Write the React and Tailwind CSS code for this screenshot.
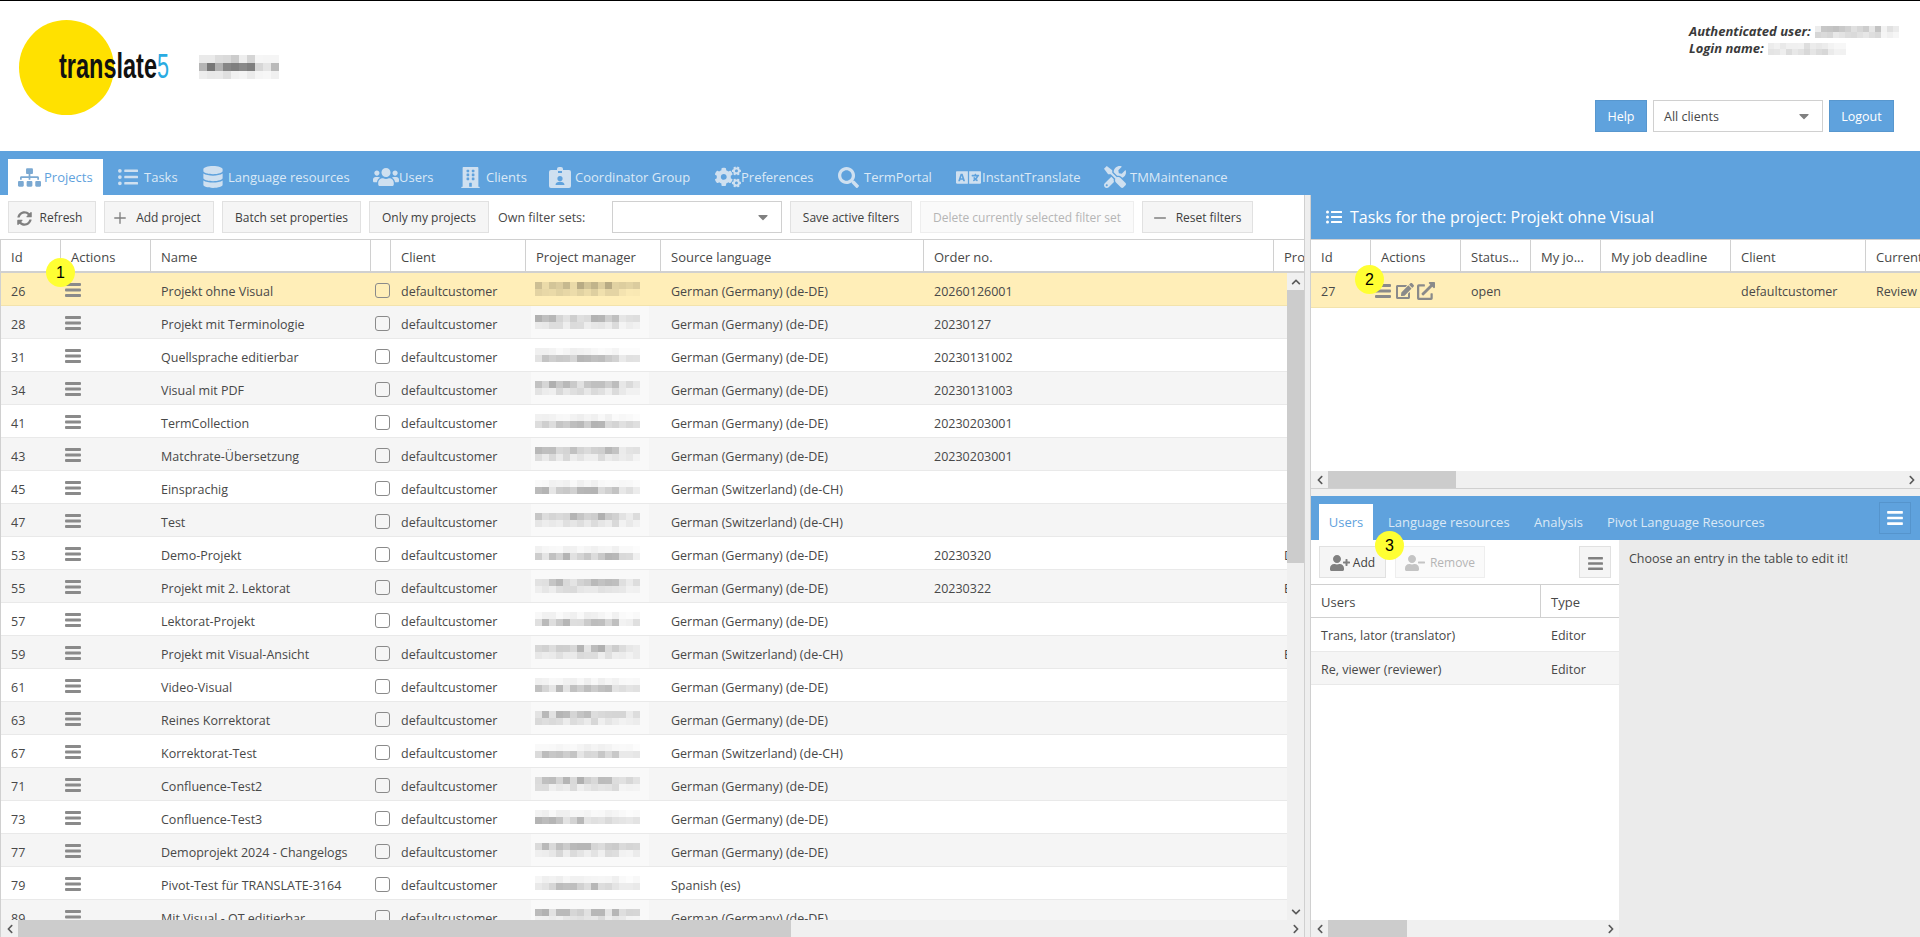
import {
  FaBars,
  FaBuilding,
  FaCaretDown,
  FaChevronDown,
  FaChevronLeft,
  FaChevronRight,
  FaChevronUp,
  FaCogs,
  FaDatabase,
  FaEdit,
  FaExternalLinkAlt,
  FaLanguage,
  FaListUl,
  FaSearch,
  FaSitemap,
  FaSyncAlt,
  FaTools,
  FaUserMinus,
  FaUserPlus,
  FaUsers,
} from 'react-icons/fa';
import { Minus, Plus } from 'lucide-react';

const DE = 'German (Germany) (de-DE)';
const CH = 'German (Switzerland) (de-CH)';

const projects = [
  { id: 26, name: 'Projekt ohne Visual', lang: DE, order: '20260126001' },
  { id: 28, name: 'Projekt mit Terminologie', lang: DE, order: '20230127' },
  { id: 31, name: 'Quellsprache editierbar', lang: DE, order: '20230131002' },
  { id: 34, name: 'Visual mit PDF', lang: DE, order: '20230131003' },
  { id: 41, name: 'TermCollection', lang: DE, order: '20230203001' },
  { id: 43, name: 'Matchrate-Übersetzung', lang: DE, order: '20230203001' },
  { id: 45, name: 'Einsprachig', lang: CH },
  { id: 47, name: 'Test', lang: CH },
  { id: 53, name: 'Demo-Projekt', lang: DE, order: '20230320', extra: 'D' },
  { id: 55, name: 'Projekt mit 2. Lektorat', lang: DE, order: '20230322', extra: 'E' },
  { id: 57, name: 'Lektorat-Projekt', lang: DE },
  { id: 59, name: 'Projekt mit Visual-Ansicht', lang: CH, extra: 'E' },
  { id: 61, name: 'Video-Visual', lang: DE },
  { id: 63, name: 'Reines Korrektorat', lang: DE },
  { id: 67, name: 'Korrektorat-Test', lang: CH },
  { id: 71, name: 'Confluence-Test2', lang: DE },
  { id: 73, name: 'Confluence-Test3', lang: DE },
  { id: 77, name: 'Demoprojekt 2024 - Changelogs', lang: DE },
  { id: 79, name: 'Pivot-Test für TRANSLATE-3164', lang: 'Spanish (es)' },
  { id: 89, name: 'Mit Visual - OT editierbar', lang: DE },
];

function BadgeIcon({ className }) {
  return (
    <svg viewBox="0 0 22 21" width="22" height="21" fill="currentColor" className={className}>
      <path fillRule="evenodd" d="M2 3h6V2a2 2 0 0 1 2-2h2a2 2 0 0 1 2 2v1h6a2 2 0 0 1 2 2v14a2 2 0 0 1-2 2H2a2 2 0 0 1-2-2V5a2 2 0 0 1 2-2zm7 1v2h4V4H9zm2 5a2.6 2.6 0 1 0 0 5.200a2.600 2.600 0 0 0 0-5.200zm-4.500 9h9c0-2.200-2-3.200-4.500-3.200S6.500 15.800 6.500 18z" />
    </svg>
  );
}

// action column menu, heavier than FaBars at this size
function RowMenuIcon() {
  return (
    <svg viewBox="0 0 16 14" width="16" height="14" fill="#8a8a8a" className="block">
      <rect y="0" width="16" height="3" rx="1" />
      <rect y="5.500" width="16" height="3" rx="1" />
      <rect y="11" width="16" height="3" rx="1" />
    </svg>
  );
}

const mainTabs = [
  { label: 'Projects', Icon: FaSitemap, size: 'text-[23px]', width: 'w-[95px]', active: true },
  { label: 'Tasks', Icon: FaListUl, size: 'text-[20px]', width: 'w-[79px]' },
  { label: 'Language resources', Icon: FaDatabase, size: 'text-[22px]', width: 'w-[166px]' },
  { label: 'Users', Icon: FaUsers, size: 'text-[26px]', width: 'w-[82px]' },
  { label: 'Clients', Icon: FaBuilding, size: 'text-[21px]', width: 'w-[84px]' },
  { label: 'Coordinator Group', Icon: BadgeIcon, size: '', width: 'w-[161px]' },
  { label: 'Preferences', Icon: FaCogs, size: 'text-[26px]', width: 'w-[118px]' },
  { label: 'TermPortal', Icon: FaSearch, size: 'text-[21px]', width: 'w-[113px]' },
  { label: 'InstantTranslate', Icon: FaLanguage, size: 'text-[25px]', width: 'w-[143px]' },
  { label: 'TMMaintenance', Icon: FaTools, size: 'text-[22px]', width: 'w-[146px]' },
];

const projectCols = 'grid grid-cols-[60px_90px_220px_20px_135px_135px_263px_350px_100px]';
const taskCols = 'grid grid-cols-[60px_90px_70px_70px_130px_135px_120px]';

// the blurred names are a pixel mosaic in the reference
function Mosaic({ cols, bands, seed, cell = 7 }) {
  const rects = [];
  bands.forEach((band, y) => {
    for (let x = 0; x < cols; x++) {
      const n = Math.sin((x + 1) * 12.9898 + (y + 1) * 78.233 + seed) * 43758.5453;
      const r = n - Math.floor(n);
      const fade = x > cols - 4 ? 0.5 : 1;
      rects.push(
        <rect key={`${x}-${y}`} x={x * cell} y={y * cell} width={cell} height={cell} fill="#000" opacity={(band * 0.35 + r * band) * fade} />
      );
    }
  });
  return (
    <svg width={cols * cell} height={bands.length * cell} className="block">
      {rects}
    </svg>
  );
}

function Badge({ n, className }) {
  return (
    <div className={`absolute z-10 w-[29px] h-[29px] rounded-full bg-[#ffff33] flex items-center justify-center text-black text-[16px] font-['Liberation_Sans',sans-serif] ${className}`}>
      {n}
    </div>
  );
}

function ToolButton({ children, width, disabled }) {
  return (
    <div
      className={`h-8 shrink-0 flex items-center justify-center border pt-[2px] text-[12px] ${width} ${
        disabled
          ? 'bg-[#fafafa] border-[#eeeeee] text-[#b5b5b5]'
          : 'bg-[#f5f5f5] border-[#e1e1e1] text-[#404040]'
      }`}
    >
      {children}
    </div>
  );
}

function BlueButton({ children, width }) {
  return (
    <div className={`h-8 flex items-center justify-center pt-[2px] text-[12.500px] bg-[#5fa2dd] border border-[#5897ce] text-white ${width}`}>
      {children}
    </div>
  );
}

function Combo({ width, text }) {
  return (
    <div className={`h-8 shrink-0 flex items-center justify-between bg-white border border-[#d0d0d0] pl-[10px] pr-[10px] ${width}`}>
      <span className="pt-[3px] text-[12.500px]">{text}</span>
      <FaCaretDown className="text-[#808080] text-[16px]" />
    </div>
  );
}

function HeadCell({ children, last }) {
  return (
    <div className={`h-full flex items-center pl-[10px] pt-[4px] overflow-hidden whitespace-nowrap ${last ? '' : 'border-r border-[#d0d0d0]'}`}>
      {children}
    </div>
  );
}

function ProjectRow({ row, index }) {
  const bg = index === 0 ? 'bg-[#ffeeb8] border-[#f3e3ac]' : index % 2 === 1 ? 'bg-[#f5f5f5] border-[#e9e9e9]' : 'bg-white border-[#e9e9e9]';
  return (
    <div className={`${projectCols} h-[33px] shrink-0 items-center border-b text-[12.500px] ${bg}`}>
      <div className="pl-[10px] pt-[6px]">{row.id}</div>
      <div className="pl-[4px] pt-[2px]">
        <RowMenuIcon />
      </div>
      <div className="pl-[10px] pt-[6px] whitespace-nowrap">{row.name}</div>
      <div className="pl-[4px] pt-[2px]">
        <div className="w-[15px] h-[15px] rounded-[3px] border border-[#8a8a8a]" />
      </div>
      <div className="pl-[10px] pt-[6px]">defaultcustomer</div>
      <div className="h-full pl-[5px]">
        <div className={`w-[118px] h-full flex items-center pl-[4px] ${index === 0 ? '' : 'bg-white/40'}`}>
          <Mosaic cols={15} bands={index % 2 === 1 || index === 0 ? [0.22, 0.1] : [0.05, 0.22]} seed={row.id} />
        </div>
      </div>
      <div className="pl-[10px] pt-[6px] whitespace-nowrap">{row.lang}</div>
      <div className="pl-[10px] pt-[6px]">{row.order}</div>
      <div className="pl-[10px] pt-[6px]">{row.extra}</div>
    </div>
  );
}

function HScrollbar({ thumb }) {
  return (
    <div className="h-[17px] shrink-0 flex items-center bg-[#f0f0f0] text-[#5a5a5a]">
      <div className="w-[17px] shrink-0 flex justify-center">
        <FaChevronLeft className="text-[10px]" />
      </div>
      <div className={`h-full bg-[#cccccc] ${thumb}`} />
      <div className="flex-1" />
      <div className="w-[17px] shrink-0 flex justify-center">
        <FaChevronRight className="text-[10px]" />
      </div>
    </div>
  );
}

function ProjectsPanel() {
  return (
    <div className="w-[1304px] shrink-0 flex flex-col min-h-0 bg-white">
      <div className="h-11 shrink-0 flex items-center gap-2 pl-2">
        <ToolButton width="w-[88px] pr-[5px]">
          <FaSyncAlt className="text-[#808080] text-[15px] mr-2" />
          Refresh
        </ToolButton>
        <ToolButton width="w-[110px] pr-[6px]">
          <Plus size={18} strokeWidth={1.800} className="text-[#808080] mr-[7px]" />
          Add project
        </ToolButton>
        <ToolButton width="w-[139px]">Batch set properties</ToolButton>
        <ToolButton width="w-[120px]">Only my projects</ToolButton>
        <div className="w-[107px] shrink-0 pl-px pt-[2px] text-[12.500px]">Own filter sets:</div>
        <Combo width="w-[170px]" />
        <ToolButton width="w-[122px]">Save active filters</ToolButton>
        <ToolButton width="w-[214px]" disabled>
          Delete currently selected filter set
        </ToolButton>
        <ToolButton width="w-[111px] pr-[3px]">
          <Minus size={18} strokeWidth={2.200} className="text-[#808080] mr-[7px]" />
          Reset filters
        </ToolButton>
      </div>
      <div className="relative flex-1 min-h-0 flex flex-col border-l border-[#d0d0d0]">
        <Badge n={1} className="left-[45px] top-[19px]" />
        <div className={`${projectCols} h-[34px] shrink-0 border-t border-b-2 border-[#d0d0d0] overflow-hidden`}>
          <HeadCell>Id</HeadCell>
          <HeadCell>Actions</HeadCell>
          <HeadCell>Name</HeadCell>
          <HeadCell />
          <HeadCell>Client</HeadCell>
          <HeadCell>Project manager</HeadCell>
          <HeadCell>Source language</HeadCell>
          <HeadCell>Order no.</HeadCell>
          <HeadCell last>Pro</HeadCell>
        </div>
        <div className="flex-1 min-h-0 flex">
          <div className="flex-1 min-w-0 overflow-hidden">
            {projects.map((row, i) => (
              <ProjectRow key={row.id} row={row} index={i} />
            ))}
          </div>
          <div className="w-[17px] shrink-0 flex flex-col items-center bg-[#f0f0f0] text-[#5a5a5a]">
            <div className="h-[17px] shrink-0 flex items-center">
              <FaChevronUp className="text-[10px]" />
            </div>
            <div className="w-full h-[273px] shrink-0 bg-[#cccccc]" />
            <div className="flex-1" />
            <div className="h-[17px] shrink-0 flex items-center">
              <FaChevronDown className="text-[10px]" />
            </div>
          </div>
        </div>
        <HScrollbar thumb="w-[773px]" />
      </div>
    </div>
  );
}

function TasksPanel() {
  return (
    <div className="h-[294px] shrink-0 flex flex-col">
      <div className="h-11 shrink-0 flex items-center pl-[15px] bg-[#5fa2dd] text-white text-[16px]">
        <FaListUl className="text-[16px] mr-[8px]" />
        Tasks for the project: Projekt ohne Visual
      </div>
      <div className="relative flex-1 min-h-0 flex flex-col bg-white border-b border-[#d0d0d0]">
        <Badge n={2} className="left-[44px] top-[26px]" />
        <div className={`${taskCols} h-[34px] shrink-0 border-t border-b-2 border-[#d0d0d0]`}>
          <HeadCell>Id</HeadCell>
          <HeadCell>Actions</HeadCell>
          <HeadCell>Status...</HeadCell>
          <HeadCell>My jo...</HeadCell>
          <HeadCell>My job deadline</HeadCell>
          <HeadCell>Client</HeadCell>
          <HeadCell last>Current</HeadCell>
        </div>
        <div className={`${taskCols} h-[35px] shrink-0 items-center bg-[#ffeeb8] border-b border-[#f3e3ac] text-[12.500px]`}>
          <div className="pl-[10px] pt-[5px]">27</div>
          <div className="pl-[4px] pt-[1px] flex items-center text-[#8a8a8a]">
            <RowMenuIcon />
            <FaEdit className="text-[18px] ml-[5px]" />
            <FaExternalLinkAlt className="text-[18px] ml-[3px]" />
          </div>
          <div className="pl-[10px] pt-[5px]">open</div>
          <div />
          <div />
          <div className="pl-[10px] pt-[5px]">defaultcustomer</div>
          <div className="pl-[10px] pt-[5px] whitespace-nowrap overflow-hidden">Review</div>
        </div>
        <div className="flex-1" />
        <HScrollbar thumb="w-[128px]" />
      </div>
    </div>
  );
}

function AssocPanel() {
  return (
    <div className="flex-1 min-h-0 flex flex-col">
      <div className="relative h-11 shrink-0 flex items-end pl-2 bg-[#5fa2dd] text-[#dbe9f6]">
        <div className="w-[54px] h-9 flex items-center justify-center pt-[2px] bg-white text-[#5fa2dd]">Users</div>
        <div className="ml-[15px] w-[122px] h-9 flex items-center pt-[2px]">Language resources</div>
        <div className="ml-6 w-[49px] h-9 flex items-center pt-[2px]">Analysis</div>
        <div className="ml-6 h-9 flex items-center pt-[2px]">Pivot Language Resources</div>
        <div className="absolute right-[9px] top-[6px] w-8 h-8 flex items-center justify-center border border-[#5594cc] text-white">
          <FaBars className="text-[18px]" />
        </div>
      </div>
      <div className="flex-1 min-h-0 flex">
        <div className="relative w-[308px] shrink-0 flex flex-col bg-white">
          <Badge n={3} className="left-[64px] top-[-9px]" />
          <div className="h-11 shrink-0 flex items-center pl-2 pr-2">
            <ToolButton width="w-[67px]">
              <FaUserPlus className="text-[#808080] text-[20px] mr-[3px]" />
              Add
            </ToolButton>
            <div className="ml-[9px]">
              <ToolButton width="w-[90px]" disabled>
                <FaUserMinus className="text-[#c4c4c4] text-[20px] mr-[5px]" />
                Remove
              </ToolButton>
            </div>
            <div className="ml-auto">
              <ToolButton width="w-8">
                <FaBars className="text-[#808080] text-[17px]" />
              </ToolButton>
            </div>
          </div>
          <div className="grid grid-cols-[230px_78px] h-[34px] shrink-0 border-t border-b border-[#d0d0d0]">
            <HeadCell>Users</HeadCell>
            <HeadCell last>Type</HeadCell>
          </div>
          <div className="grid grid-cols-[230px_78px] h-[34px] shrink-0 items-center border-b border-[#e9e9e9] text-[12.500px]">
            <div className="pl-[10px] pt-[4px]">Trans, lator (translator)</div>
            <div className="pl-[10px] pt-[4px]">Editor</div>
          </div>
          <div className="grid grid-cols-[230px_78px] h-[33px] shrink-0 items-center bg-[#f5f5f5] border-b border-[#e9e9e9] text-[12.500px]">
            <div className="pl-[10px] pt-[4px]">Re, viewer (reviewer)</div>
            <div className="pl-[10px] pt-[4px]">Editor</div>
          </div>
          <div className="flex-1" />
          <HScrollbar thumb="w-[79px]" />
        </div>
        <div className="flex-1 bg-[#ebebeb] pl-[10px] pt-[10px] text-[12.500px]">Choose an entry in the table to edit it!</div>
      </div>
    </div>
  );
}

export default function App() {
  return (
    <div className="h-screen flex flex-col overflow-hidden bg-white text-[13px] text-[#484848] font-['Open_Sans',sans-serif]">
      <header className="relative h-[151px] shrink-0 border-t border-black">
        <div className="absolute left-[19px] top-[19px] w-[95px] h-[95px] rounded-full bg-[#ffe100]" />
        <svg width="120" height="40" className="absolute left-[58px] top-[46px]">
          <text x="1" y="31" fontSize="35" fontWeight="bold" textLength="98" lengthAdjust="spacingAndGlyphs" fontFamily="Liberation Sans, sans-serif" fill="#111">
            translate
          </text>
          <text x="99" y="31" fontSize="35" textLength="12" lengthAdjust="spacingAndGlyphs" fontFamily="Liberation Sans, sans-serif" fill="#29abe2">
            5
          </text>
        </svg>
        <div className="absolute left-[199px] top-[54px]">
          <Mosaic cols={10} bands={[0.16, 0.42, 0.1]} seed={7} cell={8} />
        </div>
        <div className="absolute left-[1689px] top-[22px] font-bold italic leading-[17px] text-[#3a3a3a]">
          <div className="flex items-center gap-1">
            Authenticated user:
            <Mosaic cols={14} bands={[0.18, 0.12]} seed={3} cell={6} />
          </div>
          <div className="flex items-center gap-1">
            Login name:
            <Mosaic cols={13} bands={[0.1, 0.14]} seed={11} cell={6} />
          </div>
        </div>
        <div className="absolute right-[26px] top-[99px] flex gap-[6px]">
          <BlueButton width="w-[52px]">Help</BlueButton>
          <Combo width="w-[170px]" text="All clients" />
          <BlueButton width="w-[65px]">Logout</BlueButton>
        </div>
      </header>
      <nav className="h-11 shrink-0 flex items-end gap-[5px] pl-2 bg-[#5fa2dd] text-[#dbe9f6]">
        {mainTabs.map(({ label, Icon, size, width, active }) => (
          <div key={label} className={`h-9 flex items-center pl-[10px] whitespace-nowrap ${width} ${active ? 'bg-white text-[#5fa2dd]' : ''}`}>
            <span className="w-[26px] shrink-0">
              <Icon className={`${size} ${active ? 'text-[#7ba9d2]' : 'text-[#cfe0f0]'}`} />
            </span>
            <span className="pt-[1px]">{label}</span>
          </div>
        ))}
      </nav>
      <main className="flex-1 min-h-0 flex">
        <ProjectsPanel />
        <div className="w-[7px] shrink-0 bg-[#eeeeee] border-l border-r border-[#d0d0d0]" />
        <div className="flex-1 min-w-0 flex flex-col bg-[#f0f0f0]">
          <TasksPanel />
          <div className="h-[7px] shrink-0" />
          <AssocPanel />
        </div>
      </main>
    </div>
  );
}
